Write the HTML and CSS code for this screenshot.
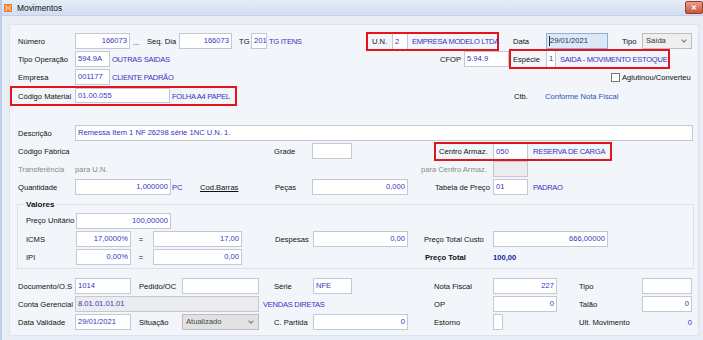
FILE: index.html
```html
<!DOCTYPE html>
<html lang="pt-BR">
<head>
    <meta charset="UTF-8">
    <title>Movimentos</title>
    <link rel="stylesheet" href="styles.css">
</head>
<body>
    <div class="window">
        <div class="titlebar">
            <svg class="app-icon" width="8" height="8" viewBox="0 0 8 8">
                <rect width="8" height="8" fill="#f07a2a"/>
                <path d="M1 2h2M5 2h2M2 4h4M1 6h2M5 6h2" stroke="#fff" stroke-width="1"/>
            </svg>
            <span class="title">Movimentos</span>
            <span class="close">✕</span>
        </div>

        <div class="body">
            <div class="panel">
                <!-- cabeçalho -->
                <div class="row">
                    <span class="lbl w57">Número</span>
                    <span class="fld num w55">166073</span>
                    <span class="lbl w17 dots">...</span>
                    <span class="lbl w32">Seq. Dia</span>
                    <span class="fld num w53">166073</span>
                    <span class="lbl w7"></span>
                    <span class="lbl w12">TG</span>
                    <span class="fld w16">201</span>
                    <span class="lbl val caps w99 pl2">TG ITENS</span>
                    <span class="red w133">
                        <span class="lbl w24 pl4">U.N.</span>
                        <span class="fld w16 inbox">2</span>
                        <span class="lbl val caps w89 pl4">EMPRESA MODELO LTDA</span>
                    </span>
                    <span class="lbl w14"></span>
                    <span class="lbl w33">Data</span>
                    <span class="fld focus w62"><span class="caret"></span>29/01/2021</span>
                    <span class="lbl w14"></span>
                    <span class="lbl w20">Tipo</span>
                    <span class="sel w50">Saída<span class="chev"></span></span>
                </div>

                <div class="row">
                    <span class="lbl w57">Tipo Operação</span>
                    <span class="fld w35">594.9A</span>
                    <span class="lbl val caps w330 pl2">OUTRAS SAIDAS</span>
                    <span class="lbl w24">CFOP</span>
                    <span class="fld w45">5.94.9</span>
                    <span class="red w161 tall">
                        <span class="lbl w35 pl2">Espécie</span>
                        <span class="fld w10 inbox">1</span>
                        <span class="lbl val caps w112 pl4">SAIDA - MOVIMENTO ESTOQUE</span>
                    </span>
                </div>

                <div class="row">
                    <span class="lbl w57">Empresa</span>
                    <span class="fld w35">001177</span>
                    <span class="lbl val caps w501 pl2">CLIENTE PADRÃO</span>
                    <span class="check"></span>
                    <span class="lbl pl2">Aglutinou/Converteu</span>
                </div>

                <div class="row row-tall">
                    <span class="red w227 out-left tall">
                        <span class="lbl w63 pl6">Código Material</span>
                        <span class="fld w95 h15">01.00.055</span>
                        <span class="lbl val caps w65 pl2">FOLHA A4 PAPEL</span>
                    </span>
                    <span class="lbl w277"></span>
                    <span class="lbl w31">Ctb.</span>
                    <span class="lbl link">Conforme Nota Fiscal</span>
                </div>

                <!-- item -->
                <div class="row gap-top">
                    <span class="lbl w57">Descrição</span>
                    <span class="fld w618">Remessa Item 1 NF 26298 série 1NC U.N. 1.</span>
                </div>

                <div class="row">
                    <span class="lbl w256">Código Fábrica</span>
                    <span class="lbl w38">Grade</span>
                    <span class="fld w40"></span>
                    <span class="lbl w82"></span>
                    <span class="red w178">
                        <span class="lbl w57 pl3">Centro Armaz.</span>
                        <span class="fld w35 inbox">050</span>
                        <span class="lbl val caps w82 pl5">RESERVA DE CARGA</span>
                    </span>
                </div>

                <div class="row">
                    <span class="lbl muted w57">Transferência</span>
                    <span class="lbl muted w346">para U.N.</span>
                    <span class="lbl muted w72">para Centro Armaz.</span>
                    <span class="fld off w35"></span>
                </div>

                <div class="row">
                    <span class="lbl w57">Quantidade</span>
                    <span class="fld num w96">1,000000</span>
                    <span class="lbl val w29 pl1">PC</span>
                    <span class="lbl under w75">Cod.Barras</span>
                    <span class="lbl w37">Peças</span>
                    <span class="fld num w96">0,000</span>
                    <span class="lbl w27"></span>
                    <span class="lbl w58">Tabela de Preço</span>
                    <span class="fld w35">01</span>
                    <span class="lbl val caps pl5">PADRAO</span>
                </div>

                <!-- valores -->
                <div class="group">
                    <span class="group-title">Valores</span>
                    <div class="row first">
                        <span class="lbl w50">Preço Unitário</span>
                        <span class="fld num w95">100,00000</span>
                    </div>
                    <div class="row">
                        <span class="lbl w50">ICMS</span>
                        <span class="fld num w55">17,0000%</span>
                        <span class="lbl eq w22">=</span>
                        <span class="fld num w89">17,00</span>
                        <span class="lbl w33"></span>
                        <span class="lbl w38">Despesas</span>
                        <span class="fld num w95">0,00</span>
                        <span class="lbl w16"></span>
                        <span class="lbl w69">Preço Total Custo</span>
                        <span class="fld num w115">666,00000</span>
                    </div>
                    <div class="row">
                        <span class="lbl w50">IPI</span>
                        <span class="fld num w55">0,00%</span>
                        <span class="lbl eq w22">=</span>
                        <span class="fld num w89">0,00</span>
                        <span class="lbl w183"></span>
                        <span class="lbl strong w68">Preço Total</span>
                        <span class="lbl strong total">100,00</span>
                    </div>
                </div>

                <!-- documento -->
                <div class="row doc-top">
                    <span class="lbl w57">Documento/O.S</span>
                    <span class="fld w56">1014</span>
                    <span class="lbl w8"></span>
                    <span class="lbl w43">Pedido/OC</span>
                    <span class="fld w77"></span>
                    <span class="lbl w15"></span>
                    <span class="lbl w39">Série</span>
                    <span class="fld w39">NFE</span>
                    <span class="lbl w82"></span>
                    <span class="lbl w59">Nota Fiscal</span>
                    <span class="fld num w64">227</span>
                    <span class="lbl w22"></span>
                    <span class="lbl w63">Tipo</span>
                    <span class="fld w50"></span>
                </div>

                <div class="row">
                    <span class="lbl w57">Conta Gerencial</span>
                    <span class="fld off w184">8.01.01.01.01</span>
                    <span class="lbl val caps w175 pl4">VENDAS DIRETAS</span>
                    <span class="lbl w59">OP</span>
                    <span class="fld num w64">0</span>
                    <span class="lbl w22"></span>
                    <span class="lbl w63">Talão</span>
                    <span class="fld num w50">0</span>
                </div>

                <div class="row">
                    <span class="lbl w57">Data Validade</span>
                    <span class="fld w56">29/01/2021</span>
                    <span class="lbl w8"></span>
                    <span class="lbl w43">Situação</span>
                    <span class="sel grey w77">Atualizado<span class="chev"></span></span>
                    <span class="lbl w15"></span>
                    <span class="lbl w39">C. Partida</span>
                    <span class="fld num w95">0</span>
                    <span class="lbl w26"></span>
                    <span class="lbl w59">Estorno</span>
                    <span class="fld w10"></span>
                    <span class="lbl w76"></span>
                    <span class="lbl split w113">Ult. Movimento<span class="val">0</span></span>
                </div>
            </div>
        </div>
    </div>
</body>
</html>
```

FILE: styles.css
```css
body {
    margin: 0;
    font-family: "Liberation Sans", Arial, sans-serif;
    font-size: 7.6px;
    color: #111;
    overflow: hidden;
}

.window {
    width: 703px;
    height: 340px;
    box-sizing: border-box;
    border-left: 2px solid #bccfe8;
    background: #e9eef6;
}

.titlebar {
    height: 15px;
    display: flex;
    align-items: center;
    background: linear-gradient(#e4ecf7, #d3dff0);
    border-bottom: 1px solid #c2d1e6;
}

.app-icon {
    margin-left: 2px;
    flex: none;
}

.title {
    margin-left: 5px;
    font-size: 8.4px;
    color: #111;
}

.close {
    margin-left: auto;
    width: 16px;
    height: 11px;
    margin-top: -1px;
    border: 1px solid #9c3b2c;
    border-radius: 2px;
    background: linear-gradient(#e8a08c, #c8553f);
    color: #fff;
    font-size: 7px;
    font-weight: bold;
    line-height: 11px;
    text-align: center;
}

.body {
    padding: 8px 4px 0 7px;
}

.panel {
    height: 312px;
    box-sizing: border-box;
    background: #f2f5fa;
    border: 1px solid #dde3ec;
    padding: 7px 0 0 8px;
}

.row {
    display: flex;
    align-items: center;
    height: 18px;
}

.row-tall {
    height: 20px;
}

.gap-top {
    margin-top: 18px;
}

.doc-top {
    margin-top: 8px;
}

.lbl {
    flex: none;
    box-sizing: border-box;
    white-space: nowrap;
}

.fld {
    flex: none;
    box-sizing: border-box;
    height: 16px;
    line-height: 14px;
    padding: 0 2px;
    border: 1px solid #c3c9d2;
    background: #fff;
    color: #3a32c0;
    white-space: nowrap;
    overflow: hidden;
}

.fld.num {
    text-align: right;
}

.fld.h15 {
    height: 15px;
    line-height: 13px;
}

.fld.off {
    background: #ececee;
}

.fld.focus {
    display: flex;
    align-items: center;
    background: #dde8f6;
    border-color: #8cb0dd;
    color: #2d2d6a;
    padding-left: 2px;
}

.caret {
    width: 1px;
    height: 10px;
    background: #222;
}

.fld.inbox {
    height: 100%;
    border-top: none;
    border-bottom: none;
    line-height: 15px;
}

.val {
    color: #3a32c0;
}

.caps {
    letter-spacing: -0.3px;
}

.link {
    color: #2c52b5;
}

.muted {
    color: #8a8a8a;
}

.under {
    text-decoration: underline;
}

.strong {
    font-weight: bold;
    color: #111;
}

.total {
    color: #25239a;
}

.dots {
    padding: 3px 0 0 3px;
}

.eq {
    text-align: center;
    padding-right: 2px;
}

.split {
    display: flex;
    justify-content: space-between;
}

.red {
    flex: none;
    display: flex;
    align-items: stretch;
    height: 19px;
    box-sizing: border-box;
    border: 2px solid #e5141c;
}

.red .lbl {
    display: flex;
    align-items: center;
}

.red.tall {
    height: 20px;
}

.out-left {
    margin-left: -8px;
}

.check {
    flex: none;
    width: 9px;
    height: 9px;
    box-sizing: border-box;
    border: 1px solid #777;
    background: #fff;
}

.sel {
    flex: none;
    position: relative;
    box-sizing: border-box;
    height: 16px;
    line-height: 14px;
    padding: 0 3px;
    border: 1px solid #bdbdbd;
    background: #efefef;
    color: #333;
}

.sel.grey {
    background: #e2e2e2;
    color: #444;
}

.chev {
    position: absolute;
    right: 5px;
    top: 4px;
    width: 3px;
    height: 3px;
    border-right: 1px solid #777;
    border-bottom: 1px solid #777;
    transform: rotate(45deg);
}

.group {
    margin: 8px 0 0 -1px;
    width: 677px;
    box-sizing: border-box;
    border: 1px solid #dce1e9;
    padding: 0 0 2px 8px;
}

.group-title {
    display: block;
    width: fit-content;
    height: 11px;
    line-height: 11px;
    margin: -6px 0 0 -2px;
    padding: 0 2px;
    background: #f2f5fa;
    font-weight: bold;
    font-size: 8px;
    color: #111;
}

.group .row.first {
    margin-top: 1px;
    height: 19px;
}

.pl1 { padding-left: 1px; }
.pl2 { padding-left: 2px; }
.pl3 { padding-left: 3px; }
.pl4 { padding-left: 4px; }
.pl5 { padding-left: 5px; }
.pl6 { padding-left: 6px; }

.w7 { width: 7px; }
.w8 { width: 8px; }
.w10 { width: 10px; }
.w12 { width: 12px; }
.w14 { width: 14px; }
.w15 { width: 15px; }
.w16 { width: 16px; }
.w17 { width: 17px; }
.w20 { width: 20px; }
.w22 { width: 22px; }
.w24 { width: 24px; }
.w26 { width: 26px; }
.w27 { width: 27px; }
.w29 { width: 29px; }
.w31 { width: 31px; }
.w32 { width: 32px; }
.w33 { width: 33px; }
.w35 { width: 35px; }
.w37 { width: 37px; }
.w38 { width: 38px; }
.w39 { width: 39px; }
.w40 { width: 40px; }
.w43 { width: 43px; }
.w45 { width: 45px; }
.w50 { width: 50px; }
.w53 { width: 53px; }
.w55 { width: 55px; }
.w56 { width: 56px; }
.w57 { width: 57px; }
.w58 { width: 58px; }
.w59 { width: 59px; }
.w62 { width: 62px; }
.w63 { width: 63px; }
.w64 { width: 64px; }
.w65 { width: 65px; }
.w68 { width: 68px; }
.w69 { width: 69px; }
.w72 { width: 72px; }
.w75 { width: 75px; }
.w76 { width: 76px; }
.w77 { width: 77px; }
.w82 { width: 82px; }
.w89 { width: 89px; }
.w95 { width: 95px; }
.w96 { width: 96px; }
.w99 { width: 99px; }
.w112 { width: 112px; }
.w113 { width: 113px; }
.w115 { width: 115px; }
.w133 { width: 133px; }
.w161 { width: 161px; }
.w175 { width: 175px; }
.w178 { width: 178px; }
.w183 { width: 183px; }
.w184 { width: 184px; }
.w227 { width: 227px; }
.w256 { width: 256px; }
.w277 { width: 277px; }
.w330 { width: 330px; }
.w346 { width: 346px; }
.w501 { width: 501px; }
.w618 { width: 618px; }
```
